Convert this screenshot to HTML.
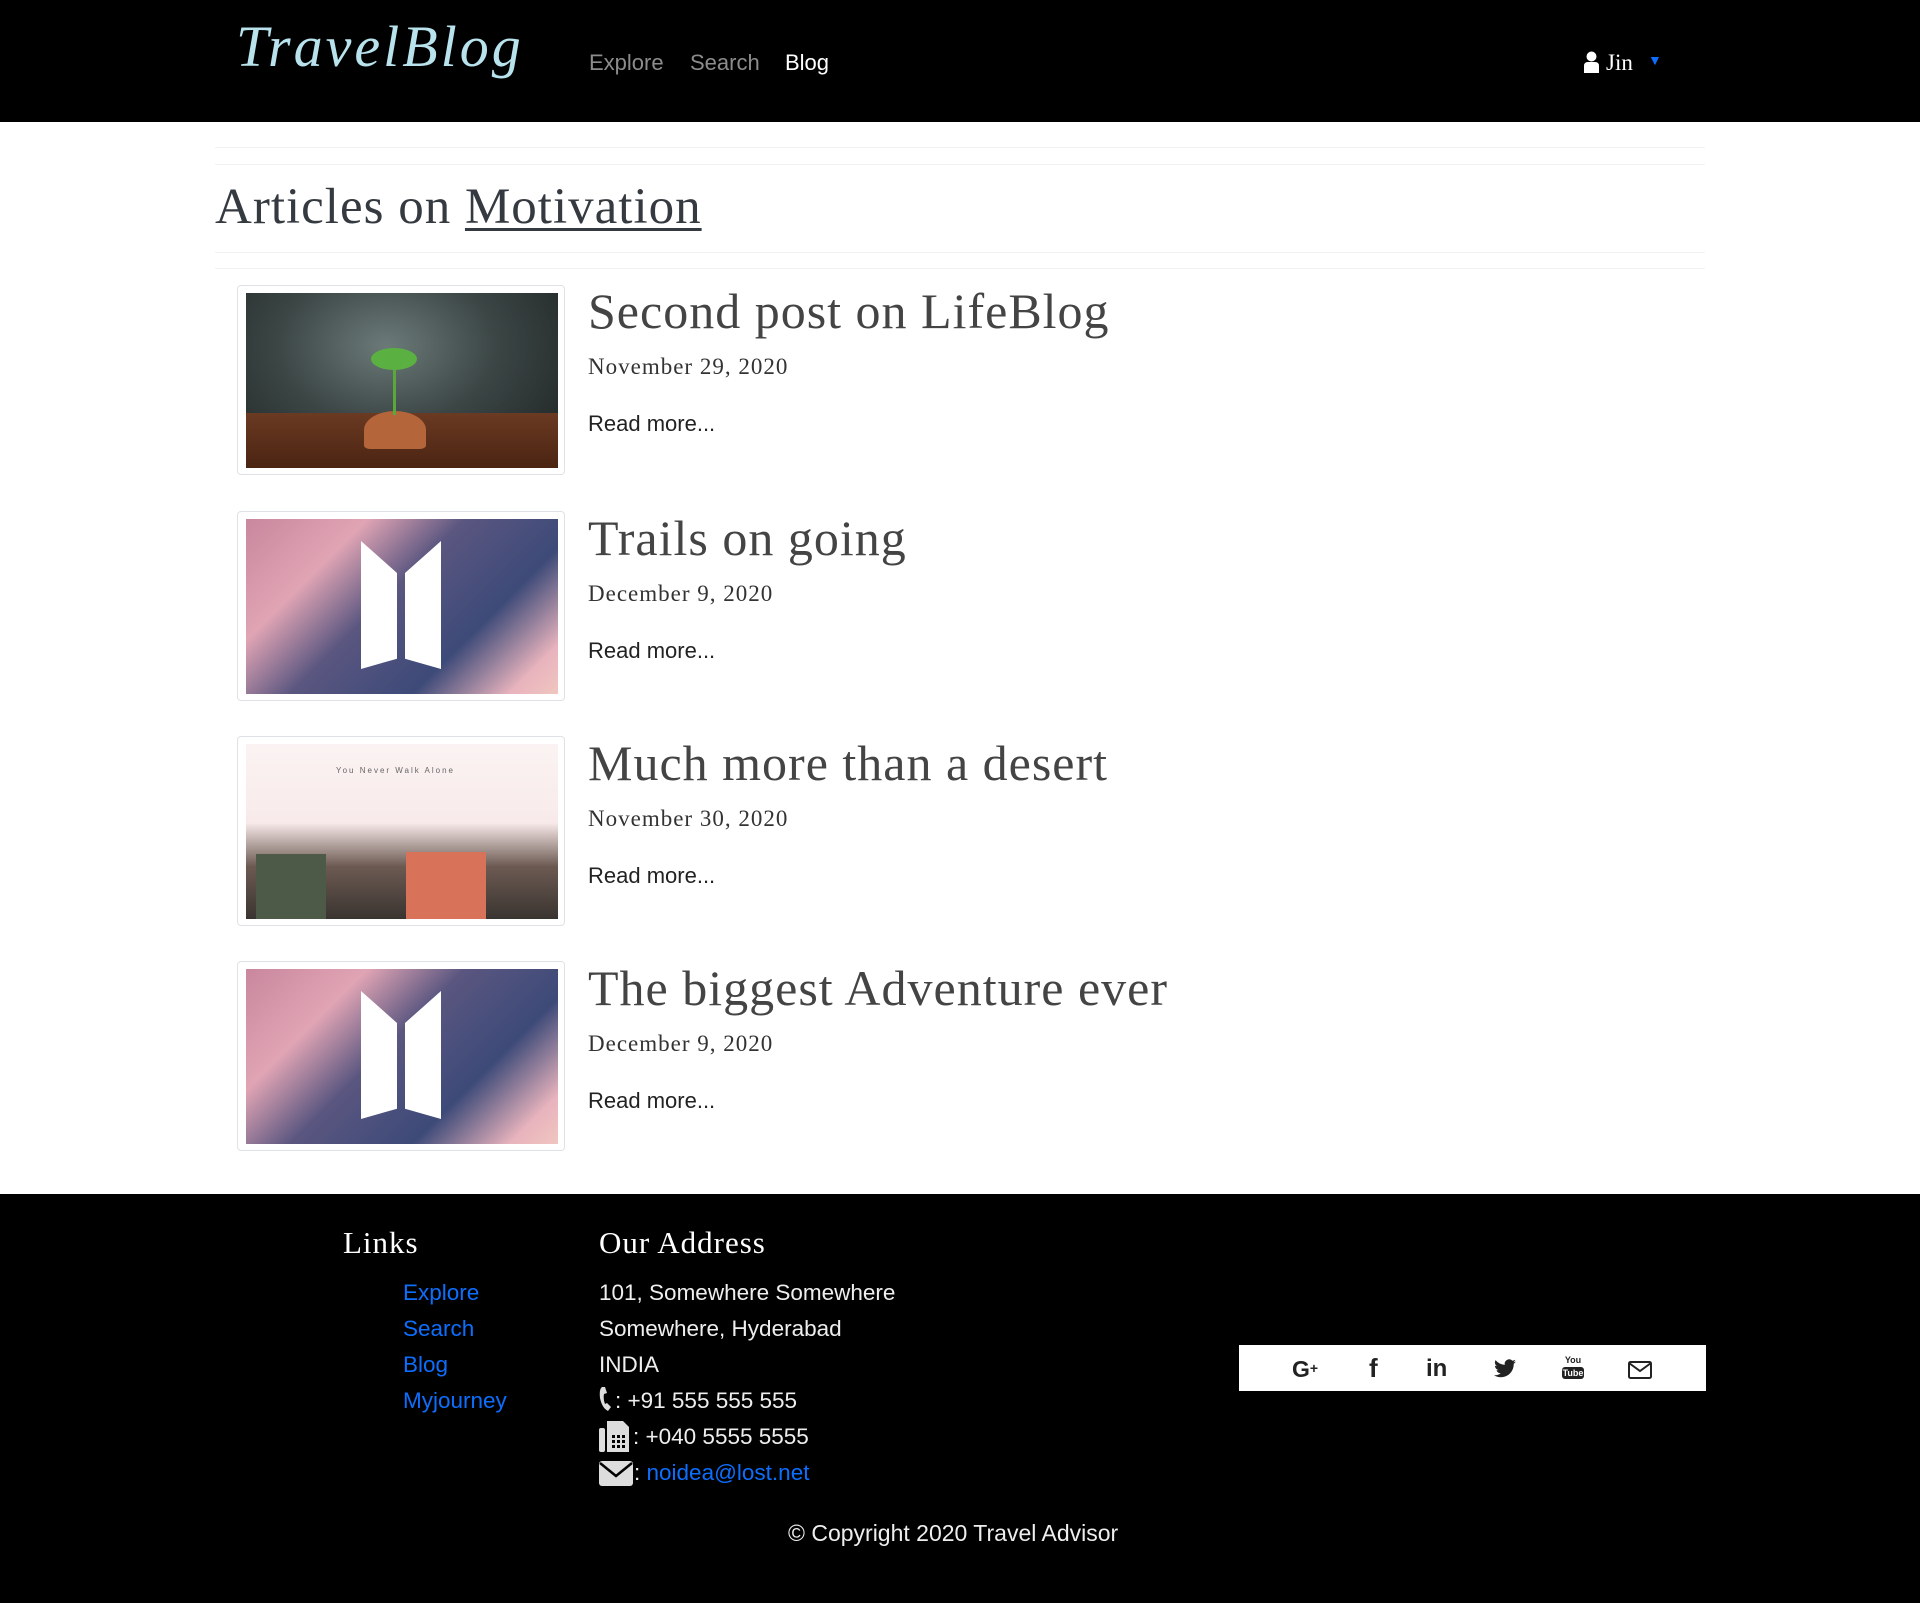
<!DOCTYPE html>
<html><head><meta charset="utf-8"><style>
*{margin:0;padding:0;box-sizing:border-box}
body{width:1920px;height:1603px;position:relative;background:#fff;font-family:"Liberation Sans",sans-serif;overflow:hidden}
.abs{position:absolute;white-space:nowrap}
nav{position:absolute;left:0;top:0;width:1920px;height:122px;background:#000}
.logo{font-family:"Liberation Serif",serif;font-style:italic;font-size:58px;color:#b8e2ec;letter-spacing:3px;line-height:58px;top:18px;left:236px}
.nl{font-size:22px;line-height:22px;top:52px;color:#8c8c8c}
.hr{position:absolute;left:215px;width:1490px;height:1px;background:#f1f1f1}
.serif{font-family:"Liberation Serif",serif}
.card{position:absolute;left:237px;width:328px;height:190px;border:1px solid #dee2e6;border-radius:4px;background:#fff}
.card .img{position:absolute;left:8px;top:7px;width:312px;height:175px;overflow:hidden}
.t{font-family:"Liberation Serif",serif;font-size:50px;line-height:50px;letter-spacing:1px;color:#444;left:588px}
.d{font-family:"Liberation Serif",serif;font-size:23px;line-height:23px;letter-spacing:1px;color:#333;left:588px}
.r{font-size:22px;line-height:22px;color:#222;left:588px}
footer{position:absolute;left:0;top:1194px;width:1920px;height:409px;background:#000}
.fl{font-size:22.5px;line-height:22px;color:#0d6efd}
.fa{font-size:22.5px;line-height:22px;color:#eee;left:599px}
.fh{font-family:"Liberation Serif",serif;font-size:31px;line-height:31px;letter-spacing:1px;color:#fff}
.bts{background:linear-gradient(135deg,#c9879d 0%,#e0a4b4 25%,#5a5680 45%,#3d4a78 70%,#e8b3bd 90%,#f0c6c0 100%)}
</style></head><body>
<nav>
<div class="abs logo">TravelBlog</div>
<div class="abs nl" style="left:589px">Explore</div>
<div class="abs nl" style="left:690px">Search</div>
<div class="abs nl" style="left:785px;color:#fff">Blog</div>
<svg class="abs" style="left:1583px;top:51px" width="17" height="22" viewBox="0 0 17 22"><circle cx="8.5" cy="5.5" r="5" fill="#fff"/><path d="M1 22V15Q1 11 5 11H12Q16 11 16 15V22Z" fill="#fff"/></svg>
<div class="abs serif" style="left:1606px;top:51px;font-size:23px;line-height:23px;color:#fff">Jin</div>
<div class="abs" style="left:1648px;top:52px;color:#0d6efd;font-size:14px">▼</div>
</nav>
<div class="hr" style="top:147px"></div>
<div class="hr" style="top:164px"></div>
<div class="abs serif" style="left:215px;top:182px;font-size:51px;line-height:51px;letter-spacing:1px;color:#343a40">Articles on <span style="text-decoration:underline;text-decoration-thickness:3px;text-underline-offset:5px">Motivation</span></div>
<div class="hr" style="top:252px"></div>
<div class="hr" style="top:268px"></div>

<div class="card" style="top:285px"><div class="img" style="background:radial-gradient(ellipse at 45% 30%,#6b7a78 0%,#3b4645 45%,#1b1f1f 100%)">
<div style="position:absolute;left:0;right:0;bottom:0;height:55px;background:linear-gradient(#6b3a22,#4a2412)"></div>
<div style="position:absolute;left:118px;top:118px;width:62px;height:38px;border-radius:50% 50% 10% 10%;background:#b5653a"></div>
<div style="position:absolute;left:147px;top:60px;width:3px;height:62px;background:#5aa83a"></div>
<div style="position:absolute;left:125px;top:55px;width:46px;height:22px;border-radius:50%;background:#5ab040"></div>
</div></div>
<div class="abs t" style="top:286px">Second post on LifeBlog</div>
<div class="abs d" style="top:355px">November 29, 2020</div>
<div class="abs r" style="top:413px">Read more...</div>

<div class="card" style="top:511px"><div class="img bts">
<div style="position:absolute;left:115px;top:22px;width:36px;height:128px;background:#fff;clip-path:polygon(0 0,100% 25%,100% 92%,0 100%)"></div>
<div style="position:absolute;left:159px;top:22px;width:36px;height:128px;background:#fff;clip-path:polygon(0 25%,100% 0,100% 100%,0 92%)"></div>
</div></div>
<div class="abs t" style="top:513px">Trails on going</div>
<div class="abs d" style="top:582px">December 9, 2020</div>
<div class="abs r" style="top:640px">Read more...</div>

<div class="card" style="top:736px"><div class="img" style="background:linear-gradient(#fbf3f3 0%,#f8eaea 45%,#6c5a52 70%,#3a3430 100%)">
<div style="position:absolute;left:90px;top:22px;font-size:8px;color:#666;letter-spacing:2px">You Never Walk Alone</div>
<div style="position:absolute;left:160px;top:108px;width:80px;height:67px;background:#d8735a"></div>
<div style="position:absolute;left:10px;top:110px;width:70px;height:65px;background:#4d5a48"></div>
</div></div>
<div class="abs t" style="top:738px">Much more than a desert</div>
<div class="abs d" style="top:807px">November 30, 2020</div>
<div class="abs r" style="top:865px">Read more...</div>

<div class="card" style="top:961px"><div class="img bts">
<div style="position:absolute;left:115px;top:22px;width:36px;height:128px;background:#fff;clip-path:polygon(0 0,100% 25%,100% 92%,0 100%)"></div>
<div style="position:absolute;left:159px;top:22px;width:36px;height:128px;background:#fff;clip-path:polygon(0 25%,100% 0,100% 100%,0 92%)"></div>
</div></div>
<div class="abs t" style="top:963px">The biggest Adventure ever</div>
<div class="abs d" style="top:1032px">December 9, 2020</div>
<div class="abs r" style="top:1090px">Read more...</div>

<footer></footer>
<div class="abs fh" style="left:343px;top:1227px">Links</div>
<div class="abs fh" style="left:599px;top:1227px">Our Address</div>
<div class="abs fl" style="left:403px;top:1282px">Explore</div>
<div class="abs fl" style="left:403px;top:1318px">Search</div>
<div class="abs fl" style="left:403px;top:1354px">Blog</div>
<div class="abs fl" style="left:403px;top:1390px">Myjourney</div>
<div class="abs fa" style="top:1282px">101, Somewhere Somewhere</div>
<div class="abs fa" style="top:1318px">Somewhere, Hyderabad</div>
<div class="abs fa" style="top:1354px">INDIA</div>
<svg class="abs" style="left:599px;top:1386px" width="14" height="26" viewBox="0 0 14 26"><path d="M3 1Q0 3 1 12Q3 22 9 25L12 21L8 17L6 18Q4 13 5 8L8 7L6 1Z" fill="#ddd"/></svg>
<div class="abs fa" style="left:615px;top:1390px">: +91 555 555 555</div>
<svg class="abs" style="left:599px;top:1420px" width="32" height="33" viewBox="0 0 32 33"><rect x="0" y="8" width="6" height="24" rx="2" fill="#ddd"/><path d="M8 1H24L30 7V32H8Z" fill="#ddd"/><g fill="#000"><rect x="13" y="15" width="3" height="3"/><rect x="18" y="15" width="3" height="3"/><rect x="23" y="15" width="3" height="3"/><rect x="13" y="20" width="3" height="3"/><rect x="18" y="20" width="3" height="3"/><rect x="23" y="20" width="3" height="3"/><rect x="13" y="25" width="3" height="3"/><rect x="18" y="25" width="3" height="3"/><rect x="23" y="25" width="3" height="3"/></g></svg>
<div class="abs fa" style="left:633px;top:1426px">: +040 5555 5555</div>
<svg class="abs" style="left:599px;top:1461px" width="34" height="25" viewBox="0 0 34 25"><rect x="0" y="0" width="34" height="25" rx="3" fill="#ddd"/><path d="M1 2L17 15L33 2" stroke="#000" stroke-width="2.5" fill="none"/></svg>
<div class="abs fa" style="left:634px;top:1462px">: <span style="color:#0d6efd">noidea@lost.net</span></div>
<div class="abs" style="left:1239px;top:1345px;width:467px;height:46px;background:#fff"></div>
<div class="abs" style="left:1292px;top:1357px;font-size:23px;font-weight:bold;color:#222;line-height:23px">G<span style="font-size:14px;vertical-align:4px">+</span></div>
<div class="abs" style="left:1369px;top:1355px;font-size:26px;font-weight:bold;color:#222;line-height:26px">f</div>
<div class="abs" style="left:1426px;top:1357px;font-size:24px;font-weight:bold;color:#222;line-height:24px">in</div>
<svg class="abs" style="left:1494px;top:1359px" width="22" height="19" viewBox="0 0 24 20"><path d="M24 2.4a9.8 9.8 0 0 1-2.8.8A4.9 4.9 0 0 0 23.3.4a9.9 9.9 0 0 1-3.1 1.2A4.9 4.9 0 0 0 11.8 6 14 14 0 0 1 1.7.9a4.9 4.9 0 0 0 1.5 6.6A4.9 4.9 0 0 1 1 6.9a4.9 4.9 0 0 0 3.9 4.8 4.9 4.9 0 0 1-2.2.1 4.9 4.9 0 0 0 4.6 3.4A9.9 9.9 0 0 1 0 17.3 14 14 0 0 0 7.5 19.5c9.1 0 14-7.5 14-14v-.6A10 10 0 0 0 24 2.4z" fill="#222"/></svg>
<div class="abs" style="left:1562px;top:1356px;width:22px;text-align:center;font-size:9px;font-weight:bold;color:#222;line-height:9px">You</div>
<div class="abs" style="left:1562px;top:1367px;width:22px;height:12px;background:#222;border-radius:3px;color:#fff;font-size:9px;font-weight:bold;text-align:center;line-height:12px">Tube</div>
<svg class="abs" style="left:1628px;top:1361px" width="24" height="18" viewBox="0 0 24 18"><rect x="1" y="1" width="22" height="16" rx="1.5" fill="none" stroke="#222" stroke-width="2"/><path d="M1 2L12 10L23 2" fill="none" stroke="#222" stroke-width="2"/></svg>
<div class="abs" style="left:788px;top:1522px;font-size:23px;line-height:23px;color:#eee">© Copyright 2020 Travel Advisor</div>
</body></html>
